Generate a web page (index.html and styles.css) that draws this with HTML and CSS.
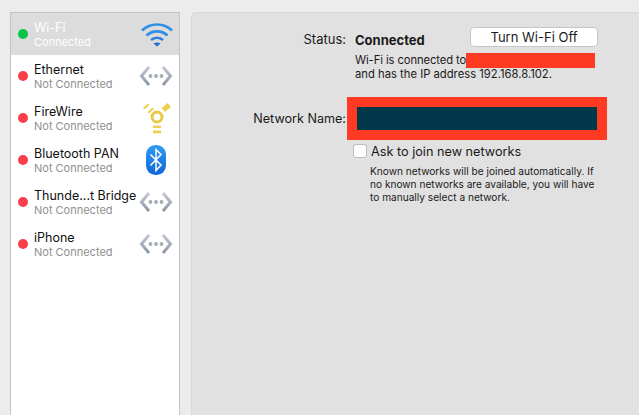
FILE: index.html
```html
<!DOCTYPE html>
<html lang="en">
<head>
<meta charset="UTF-8" />
<title>Network</title>
<link rel="stylesheet" href="styles.css">
</head>
<body>
	<svg class="defs" width="0" height="0">
		<defs>
			<linearGradient id="arrow" x1="0" y1="0" x2="0" y2="1">
				<stop offset="0" stop-color="#c3c9d3" />
				<stop offset="1" stop-color="#8d97a6" />
			</linearGradient>
			<linearGradient id="blue" x1="0" y1="0" x2="0" y2="1">
				<stop offset="0" stop-color="#2f9bf2" />
				<stop offset="1" stop-color="#1266d8" />
			</linearGradient>
			<symbol id="ether" viewBox="0 0 34 24">
				<path d="M10 3 L2.5 12 L10 21" fill="none" stroke="url(#arrow)" stroke-width="3" />
				<path d="M24 3 L31.5 12 L24 21" fill="none" stroke="url(#arrow)" stroke-width="3" />
				<circle cx="11.5" cy="12" r="1.9" fill="#a3abb8" />
				<circle cx="17" cy="12" r="1.9" fill="#a3abb8" />
				<circle cx="22.5" cy="12" r="1.9" fill="#a3abb8" />
			</symbol>
		</defs>
	</svg>
	<ul class="services">
		<li class="service current">
			<span class="dot green"></span>
			<div class="names">
				<div class="name">Wi-Fi</div>
				<div class="state">Connected</div>
			</div>
			<svg class="icon tall" viewBox="-1 0 34 32">
				<g fill="none">
					<path d="M2 12.5 C10.5 4.5 23.5 4.5 32 12.5" stroke="#2b8fe6" stroke-width="2.6" />
					<path d="M6.5 17.5 C12.5 12 21.5 12 27.5 17.5" stroke="#2b8fe6" stroke-width="2.6" />
					<path d="M11 22 C14.5 19 19.5 19 23 22" stroke="#2b80dc" stroke-width="2.6" />
				</g>
				<path d="M13.5 25.5 C16 24 18 24 20.5 25.5 L17 28.5 Z" fill="#1f6fd0" />
			</svg>
		</li>
		<li class="service">
			<span class="dot"></span>
			<div class="names">
				<div class="name">Ethernet</div>
				<div class="state">Not Connected</div>
			</div>
			<svg class="icon"><use href="#ether" /></svg>
		</li>
		<li class="service">
			<span class="dot"></span>
			<div class="names">
				<div class="name">FireWire</div>
				<div class="state">Not Connected</div>
			</div>
			<svg class="icon tall" viewBox="-1 0 34 32">
				<g fill="#edcf52">
					<path d="M3 6 L8 1.5 L9.5 3 L4.5 7.5 Z" />
					<path d="M7.5 10 L12.5 5.5 L14 7 L9 11.5 Z" />
					<path d="M21.5 6 L27.5 1 L31 5 L25 10 Z" />
					<rect x="13" y="23.5" width="8" height="2.6" />
					<rect x="13" y="28.5" width="8" height="2.8" />
				</g>
				<circle cx="17" cy="15" r="5" fill="none" stroke="#e8c845" stroke-width="3" />
			</svg>
		</li>
		<li class="service">
			<span class="dot"></span>
			<div class="names">
				<div class="name">Bluetooth PAN</div>
				<div class="state">Not Connected</div>
			</div>
			<svg class="icon tall" viewBox="0 0 34 32">
				<rect x="7" y="1" width="20" height="30" rx="9.5" fill="url(#blue)" />
				<path d="M11.5 10.5 L22 21 L17 26.5 L17 5.5 L22 10.5 L11.5 21.5" fill="none" stroke="#fff" stroke-width="1.5" />
			</svg>
		</li>
		<li class="service">
			<span class="dot"></span>
			<div class="names">
				<div class="name">Thunde...t Bridge</div>
				<div class="state">Not Connected</div>
			</div>
			<svg class="icon"><use href="#ether" /></svg>
		</li>
		<li class="service">
			<span class="dot"></span>
			<div class="names">
				<div class="name">iPhone</div>
				<div class="state">Not Connected</div>
			</div>
			<svg class="icon"><use href="#ether" /></svg>
		</li>
	</ul>
	<div class="panel">
		<div class="status-row">
			<div class="label status-label">Status:</div>
			<div class="status-value">Connected</div>
			<button class="off-btn">Turn Wi-Fi Off</button>
		</div>
		<div class="info">
			<div class="info-line"><span class="tight">Wi-Fi is connected to</span><span class="redact"></span></div>
			<div class="info-line">and has the IP address 192.168.8.102.</div>
		</div>
		<div class="name-row">
			<div class="label">Network Name:</div>
			<div class="name-box"><div class="name-field"></div></div>
		</div>
		<label class="ask">
			<span class="check"></span>
			<span>Ask to join new networks</span>
		</label>
		<p class="help">Known networks will be joined automatically. If no known networks are available, you will have to manually select a network.</p>
	</div>
</body>
</html>
```

FILE: styles.css
```css
html, body {
	height: 100%;
}
body {
	display: flex;
	gap: 11px;
	margin: 0;
	padding: 12px 0 0 10px;
	box-sizing: border-box;
	height: 415px;
	overflow: hidden;
	background-color: #ececec;
	font-family: "Inter", "Liberation Sans", sans-serif;
	color: #1a1a1a;
}
.defs {
	position: absolute;
}

.services {
	flex: none;
	width: 168px;
	margin: 0;
	padding: 0;
	list-style: none;
	background-color: #fff;
	border: 1px solid #c4c4c4;
	border-bottom: 0;
}
.service {
	display: flex;
	align-items: center;
	height: 42px;
	padding: 0 6px 0 7px;
}
.current {
	background-color: #dcdcdc;
}
.dot {
	flex: none;
	width: 10px;
	height: 10px;
	border-radius: 50%;
	background-color: #fb3f48;
}
.green {
	background-color: #0bc44a;
}
.names {
	flex: 1;
	min-width: 0;
	margin-left: 6px;
	white-space: nowrap;
}
.name {
	font-size: 12.5px;
	line-height: 15px;
	color: #111;
}
.state {
	font-size: 11px;
	line-height: 14px;
	color: #8f8f8f;
}
.current .name, .current .state {
	color: #fff;
}
.icon {
	flex: none;
	width: 34px;
	height: 24px;
}
.tall {
	height: 32px;
}

.panel {
	flex: 1;
	padding-top: 14px;
	background-color: #e1e1e1;
	border-top: 1px solid #d8d8d8;
	border-left: 1px solid #d8d8d8;
	border-top-left-radius: 5px;
	font-size: 13px;
}
.status-row {
	display: flex;
	align-items: center;
	height: 20px;
}
.label {
	flex: none;
	width: 154px;
	text-align: right;
	font-size: 12.6px;
}
.status-label {
	padding-top: 4px;
	font-size: 13px;
}
.status-value {
	width: 115px;
	margin-left: 9px;
	padding-top: 6px;
	font-weight: 700;
	font-size: 13px;
}
.off-btn {
	width: 128px;
	height: 20px;
	padding: 0;
	background-color: #fff;
	border: 1px solid #c6c6c6;
	border-radius: 4px;
	font: 13px "Inter", "Liberation Sans", sans-serif;
	color: #1a1a1a;
}
.info {
	margin: 6px 0 0 163px;
	font-size: 11.25px;
	line-height: 14px;
}
.info-line {
	display: flex;
	height: 14px;
}
.tight {
	letter-spacing: -0.1px;
}
.redact {
	width: 129px;
	height: 15px;
	background-color: #ff3a22;
}
.name-row {
	display: flex;
	align-items: center;
	margin-top: 16px;
}
.name-box {
	margin-left: 1px;
	width: 240px;
	padding: 10px;
	background-color: #ff3a22;
}
.name-field {
	height: 23px;
	background-color: #01374a;
}
.ask {
	display: flex;
	align-items: center;
	gap: 4px;
	margin: 3px 0 0 161px;
	height: 16px;
	font-size: 12.7px;
}
.check {
	width: 12px;
	height: 12px;
	background-color: #fff;
	border: 1px solid #bdbdbd;
	border-radius: 3px;
}
.help {
	width: 234px;
	margin: 6px 0 0 178px;
	font-size: 10.15px;
	line-height: 13px;
}
```
